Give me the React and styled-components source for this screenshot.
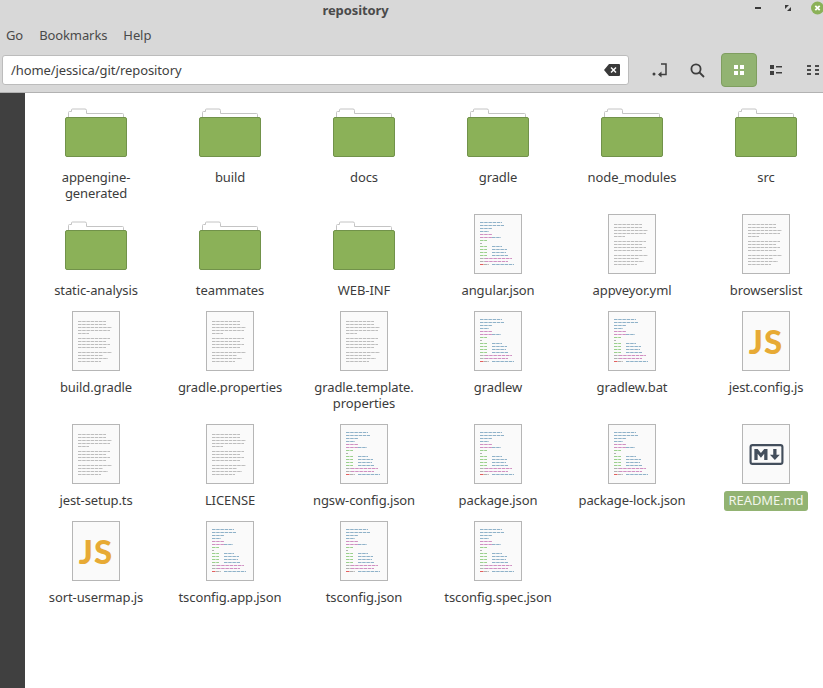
import React from "react";
import styled, { createGlobalStyle } from "styled-components";

const Global = createGlobalStyle`
  html, body { margin: 0; padding: 0; background: #fff; overflow: hidden; }
  body { font-family: "Noto Sans", "Open Sans", sans-serif; font-size: 13px; color: #3c3c3c; letter-spacing: -0.1px; }
`;
const Win = styled.div`width: 823px; height: 688px; display: flex; flex-direction: column; overflow: hidden;`;
const TitleBar = styled.header`height: 20px; display: flex; align-items: center; background: #d8d8d8;`;
const Title = styled.h1`flex: 1; margin: 0; text-align: center; font-size: 13px; font-weight: 700; color: #4a4a4a; line-height: 18px;`;
const Controls = styled.div`width: 112px; flex: none; display: flex; align-items: center; overflow: hidden;`;
const MenuBar = styled.nav`height: 30px; display: flex; align-items: center; gap: 16px; padding: 0 6px; background: #d8d8d8; color: #4a4a4a;`;
const MenuItem = styled.span`font-size: 13px; line-height: 30px;`;
const Toolbar = styled.div`height: 43px; box-sizing: border-box; display: flex; align-items: flex-start; padding: 3px 0 0 2px; background: #d8d8d8; border-bottom: 1px solid #b2b2b2;`;
const PathEntry = styled.div`width: 627px; flex: none; height: 30px; margin-top: 2px; box-sizing: border-box; display: flex; align-items: center; justify-content: space-between; padding: 0 8px 0 8px; background: #fff; border: 1px solid #bcbcbc; border-radius: 3px; font-size: 13px; color: #3f3f3f;`;
const ToolButton = styled.button`
  width: 36px; height: 34px; flex: none; padding: 0; margin: 0; display: flex; align-items: center; justify-content: center;
  background: ${p => (p.$active ? "#92b372" : "transparent")};
  border: 1px solid ${p => (p.$active ? "#7f9e60" : "transparent")};
  border-radius: 4px;
`;
const Tools = styled.div`display: flex; flex: none; gap: 1px; margin-left: ${p => p.$gap}px;`;
const Body = styled.div`flex: 1; display: flex; min-height: 0;`;
const Side = styled.aside`width: 25px; flex: none; background: #404040;`;
const Grid = styled.main`flex: 1; display: grid; grid-template-columns: repeat(6, 134px); align-content: start; row-gap: 10px; padding: 7px 0 0 4px; background: #fff;`;
const Item = styled.div`display: flex; flex-direction: column; align-items: center; min-width: 0;`;
const IconBox = styled.div`width: 64px; height: 64px; display: flex; align-items: center; justify-content: center;`;
const Label = styled.div`
  margin-top: ${p => (p.$selected ? "4px" : "3px")};
  margin-bottom: ${p => (p.$selected ? "-1px" : "0")};
  padding: ${p => (p.$selected ? "1px 5px 3px" : "2px 3px")};
  max-width: 128px; box-sizing: border-box; text-align: center; line-height: 16px; font-size: 13px; white-space: pre-line;
  border-radius: 3px;
  color: ${p => (p.$selected ? "#f2f6ec" : "#3c3c3c")};
  background: ${p => (p.$selected ? "#92b372" : "transparent")};
`;
const Page = styled.div`width: 48px; height: 60px; margin-bottom: 2px; box-sizing: border-box; border: 1.5px solid #b6b6b6; background: #fafafa; display: flex; align-items: center; justify-content: center; overflow: hidden;`;
const PageArt = styled.svg`flex: none; filter: blur(0.35px);`;
const FolderArt = styled.svg`flex: none; margin-top: 1px;`;
const JsMark = styled.span`font-family: "Lato", "Noto Sans", sans-serif; font-weight: 900; font-size: 33px; letter-spacing: 1px; color: #e7aa35; line-height: 1;`;

const Folder = () => (
  <FolderArt width="62" height="49" viewBox="0 0 62 49">
    <path d="M3.5 10V4.500q0-1 1-1h2V2q0-1 1-1h12.500q1.500 0 1.500 1.500V5.500H57.500q1 0 1 1V10" fill="#fff" stroke="#c4c4c4" />
    <rect x="0.500" y="9.500" width="61" height="39" rx="1.500" fill="#8bb158" stroke="#71924a" />
  </FolderArt>
);

const TEXT_LINES = [[11, 35], [14, 35], [17, 41], [20, 39], [23, 18], [28, 39], [31, 35], [34, 39], [37, 35], [42, 41], [45, 32], [48, 37], [51, 30]];
const B = "#8fb2c9", P = "#d08fc2", G = "#9ad08c", Y = "#b0b0b0", R = "#e2605f";
const CODE_LINES = [
  [[7, 29, B]], [[7, 31, B]], [[7, 19, B]], [[7, 16, B]], [[7, 19, P]], [[7, 19, P], [19, 28, B]], [[7, 14, G]], [[7, 9, Y]],
  [[7, 14, G], [19, 29, B]], [[7, 14, G], [19, 34, B]], [[7, 14, G], [19, 33, B]], [[7, 14, G], [19, 35, B]],
  [[7, 12, Y], [12, 39, P]], [[7, 12, Y], [12, 35, P]], [[7, 11, R], [11, 16, Y], [19, 41, B]],
];

const TextPage = () => (
  <Page>
    <PageArt width="48" height="60" viewBox="0 0 48 60">
      {TEXT_LINES.map(([y, x2]) => (
        <line key={y} x1="6" x2={x2 - 1} y1={y - 0.5} y2={y - 0.5} stroke="#bdbdbd" strokeWidth="1" strokeDasharray="3.500 0.700" />
      ))}
    </PageArt>
  </Page>
);
const CodePage = () => (
  <Page>
    <PageArt width="48" height="60" viewBox="0 0 48 60">
      {CODE_LINES.map((segs, i) =>
        segs.map(([a, b, c]) => (
          <line key={i + "-" + a} x1={a - 1} x2={b - 1} y1={8.500 + i * 3} y2={8.500 + i * 3} stroke={c} strokeWidth="1" strokeDasharray="3.500 0.700" />
        ))
      )}
    </PageArt>
  </Page>
);
const JsPage = () => <Page><JsMark>JS</JsMark></Page>;
const MdPage = () => (
  <Page>
    <svg width="37" height="21" viewBox="0 0 208 128">
      <rect x="7" y="7" width="194" height="114" rx="12" fill="none" stroke="#434e5c" strokeWidth="13" />
      <path fill="#434e5c" d="M30 98V30h20l20 25 20-25h20v68H90V59L70 84 50 59v39zm125 0l-30-33h20V30h20v35h20z" />
    </svg>
  </Page>
);

const FILES = [
  ["appengine-\ngenerated", Folder], ["build", Folder], ["docs", Folder], ["gradle", Folder], ["node_modules", Folder], ["src", Folder],
  ["static-analysis", Folder], ["teammates", Folder], ["WEB-INF", Folder], ["angular.json", CodePage], ["appveyor.yml", TextPage], ["browserslist", TextPage],
  ["build.gradle", TextPage], ["gradle.properties", TextPage], ["gradle.template.\nproperties", TextPage], ["gradlew", CodePage], ["gradlew.bat", CodePage], ["jest.config.js", JsPage],
  ["jest-setup.ts", TextPage], ["LICENSE", TextPage], ["ngsw-config.json", CodePage], ["package.json", CodePage], ["package-lock.json", CodePage], ["README.md", MdPage, true],
  ["sort-usermap.js", JsPage], ["tsconfig.app.json", CodePage], ["tsconfig.json", CodePage], ["tsconfig.spec.json", CodePage],
];

const Backspace = () => (
  <svg width="16" height="12" viewBox="0 0 16 12">
    <path fillRule="evenodd" fill="#3a3a3a" d="M5 0h10q1 0 1 1v10q0 1-1 1H5L0 6zM7.500 3L6.500 4l2 2-2 2 1 1 2-2 2 2 1-1-2-2 2-2-1-1-2 2z" />
  </svg>
);
const JumpIcon = () => (
  <svg width="16" height="16" viewBox="0 0 16 16" fill="none">
    <circle cx="2" cy="12" r="1.500" fill="#3e3e3e" />
    <path d="M9 2h5v10.500H7" stroke="#3e3e3e" strokeWidth="1.500" />
    <path d="M9.500 9.500L6 12.500l3.500 3z" fill="#3e3e3e" />
  </svg>
);
const SearchIcon = () => (
  <svg width="15" height="15" viewBox="0 0 15 15" fill="none" stroke="#3e3e3e" strokeWidth="1.800">
    <circle cx="6" cy="6" r="4.600" />
    <path d="M9.500 9.500l4.500 4.500" />
  </svg>
);
const GridIcon = () => (
  <svg width="10" height="10" viewBox="0 0 10 10" fill="#fff">
    <rect width="4" height="4" /><rect x="6" width="4" height="4" />
    <rect y="6" width="4" height="4" /><rect x="6" y="6" width="4" height="4" />
  </svg>
);
const ListIcon = () => (
  <svg width="12" height="10" viewBox="0 0 12 10" fill="#3e3e3e">
    <rect width="4" height="4" /><rect y="6" width="4" height="4" />
    <rect x="6" y="1" width="6" height="1.500" /><rect x="6" y="7" width="6" height="1.500" />
  </svg>
);
const CompactIcon = () => (
  <svg width="12" height="10" viewBox="0 0 12 10" fill="#4a4a4a">
    {[0, 4, 8].map(y => (
      <React.Fragment key={y}>
        <rect y={y} width="4" height="2" /><rect x="8" y={y} width="4" height="2" />
      </React.Fragment>
    ))}
  </svg>
);
const WindowButtons = () => (
  <svg width="112" height="20" viewBox="0 0 112 20">
    <rect x="44" y="7" width="6" height="2" fill="#3a3a3a" />
    <path d="M74 5h4L74 9zM80 11h-4l4-4z" fill="#3a3a3a" />
    <circle cx="106.500" cy="8" r="6.500" fill="#8bb158" />
    <path d="M104.300 5.800l4.400 4.400M108.700 5.800l-4.400 4.400" stroke="#fff" strokeWidth="1.800" />
  </svg>
);

export default function App() {
  return (
    <Win>
      <Global />
      <TitleBar>
        <Title>repository</Title>
        <Controls><WindowButtons /></Controls>
      </TitleBar>
      <MenuBar>
        <MenuItem>Go</MenuItem>
        <MenuItem>Bookmarks</MenuItem>
        <MenuItem>Help</MenuItem>
      </MenuBar>
      <Toolbar>
        <PathEntry>
          <span>/home/jessica/git/repository</span>
          <Backspace />
        </PathEntry>
        <Tools $gap={13}>
          <ToolButton aria-label="jump"><JumpIcon /></ToolButton>
          <ToolButton aria-label="search"><SearchIcon /></ToolButton>
        </Tools>
        <Tools $gap={6}>
          <ToolButton $active aria-label="icons"><GridIcon /></ToolButton>
          <ToolButton aria-label="list"><ListIcon /></ToolButton>
          <ToolButton aria-label="compact"><CompactIcon /></ToolButton>
        </Tools>
      </Toolbar>
      <Body>
        <Side />
        <Grid>
          {FILES.map(([name, Icon, sel]) => (
            <Item key={name}>
              <IconBox><Icon /></IconBox>
              <Label $selected={sel}>{name}</Label>
            </Item>
          ))}
        </Grid>
      </Body>
    </Win>
  );
}
